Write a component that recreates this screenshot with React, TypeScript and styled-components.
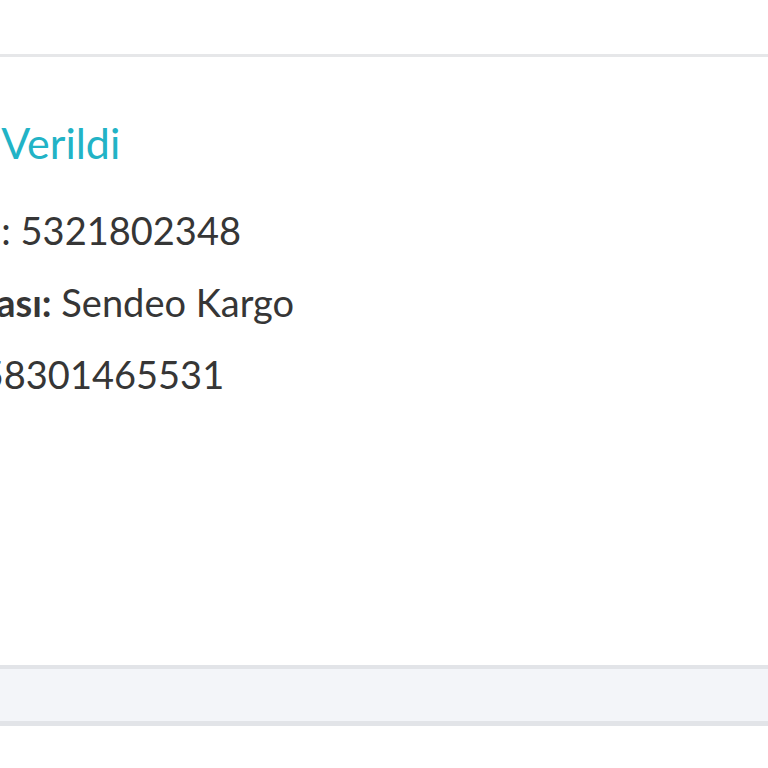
import React from 'react';
import styled, { createGlobalStyle } from 'styled-components';

const GlobalStyle = createGlobalStyle`
  html, body {
    margin: 0;
    padding: 0;
    background: #ffffff;
  }
  body {
    font-family: Lato, 'Open Sans', sans-serif;
    overflow: hidden;
  }
`;

interface InfoLine {
  label: string;
  value: string;
  indent: number;
}

const lines: InfoLine[] = [
  { label: 'Telefon', value: ': 5321802348', indent: -123 },
  { label: 'Kargo Firması:', value: ' Sendeo Kargo', indent: -191 },
  { label: 'Takip No:', value: ' 158301465531', indent: -209 },
];

export default function App() {
  return (
    <>
      <GlobalStyle />
      <Page>
        <Header />
        <Card>
          <Status $indent={-162}>Kargoya Verildi</Status>
          {lines.map((line, i) => (
            <Line key={i} $indent={line.indent}>
              <Label>{line.label}</Label>
              {line.value}
            </Line>
          ))}
        </Card>
        <Footer />
      </Page>
    </>
  );
}

const Page = styled.div`
  width: 768px;
  height: 768px;
  display: flex;
  flex-direction: column;
  overflow: hidden;
  background: #fff;
`;

const Header = styled.div`
  height: 54px;
  flex-shrink: 0;
  background: #fff;
  border-bottom: 3px solid #e6e7e9;
`;

const Card = styled.div`
  height: 612px;
  flex-shrink: 0;
  display: flex;
  flex-direction: column;
  gap: 26px;
  padding-top: 61px;
  box-sizing: border-box;
  border-bottom: 4px solid #e2e4e8;
`;

const Status = styled.div<{ $indent: number }>`
  font-size: 43px;
  line-height: 50px;
  white-space: nowrap;
  text-indent: ${(p) => p.$indent}px;
  color: #22b3c6;
  margin-bottom: 13px;
`;

const Line = styled.div<{ $indent: number }>`
  font-size: 38px;
  line-height: 46px;
  white-space: nowrap;
  text-indent: ${(p) => p.$indent}px;
  color: #363636;
`;

const Label = styled.span`
  font-weight: 700;
`;

const Footer = styled.div`
  height: 52px;
  flex-shrink: 0;
  background: #f3f5f9;
  border-bottom: 5px solid #e2e4e8;
`;
